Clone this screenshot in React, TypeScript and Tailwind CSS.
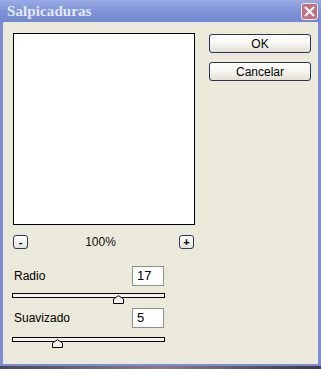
import React from "react";

const ui = { fontFamily: '"Liberation Sans", Arial, sans-serif' };

function Thumb() {
  return (
    <svg width="11" height="9" viewBox="0 0 11 9" className="block">
      <path d="M0.5 8.5 V4 L5.5 0.7 L10.5 4 V8.5 Z" fill="#f4f3ee" stroke="#000" strokeWidth="1" />
    </svg>
  );
}

function Slider({ pos }: { pos: number }) {
  return (
    <div className="relative w-[153px] h-[11px]">
      <div className="h-[5px] w-full border border-black bg-[#f3f1e8]" />
      <div className="absolute top-[2px]" style={{ left: pos }}>
        <Thumb />
      </div>
    </div>
  );
}

function SmallBtn({ children }: { children: React.ReactNode }) {
  return (
    <div className="w-[15px] h-[14px] rounded-[3px] border border-[#2c3a5a] bg-gradient-to-b from-white to-[#e4e2d6] flex items-center justify-center text-[11px] leading-none text-black font-bold">
      {children}
    </div>
  );
}

function Btn({ children }: { children: React.ReactNode }) {
  return (
    <div className="w-[102px] h-[19px] rounded-[3px] border border-[#27355a] bg-gradient-to-b from-white via-[#f6f5f0] to-[#e2e0d4] flex items-center justify-center text-[12px] text-black">
      {children}
    </div>
  );
}

export default function App() {
  return (
    <div className="w-[321px] h-[369px] flex flex-col overflow-hidden" style={ui}>
      {/* title bar */}
      <div className="h-[22px] flex items-center justify-between bg-gradient-to-b from-[#9aaae4] via-[#7f94d9] to-[#7387d2] pl-[7px] pr-[3px]">
        <span
          className="text-[15px] font-bold text-[#e4eaf8] tracking-[0.1px]"
          style={{ fontFamily: '"Liberation Serif", "Times New Roman", serif' }}
        >
          Salpicaduras
        </span>
        <div className="w-[17px] h-[17px] rounded-[3px] border border-[#f0e6ec] bg-[#c0707e] flex items-center justify-center">
          <svg width="11" height="11" viewBox="0 0 11 11">
            <path d="M1.5 1.5 L9.5 9.5 M9.5 1.5 L1.5 9.5" stroke="#fff" strokeWidth="2" strokeLinecap="round" />
          </svg>
        </div>
      </div>
      {/* body */}
      <div className="flex-1 flex border-l-[3px] border-r-[3px] border-b-[2px] border-[#7e8cd6] bg-[#ebe9da]">
        <div className="flex flex-col pl-[9px] pt-[11px] w-[193px]">
          <div className="ml-[1px] w-[182px] h-[192px] border border-black bg-white" />
          <div className="ml-[1px] mt-[8px] w-[181px] flex items-center justify-between">
            <SmallBtn>-</SmallBtn>
            <span className="text-[12px] text-[#111] mr-[6px]">100%</span>
            <SmallBtn>+</SmallBtn>
          </div>
          <div className="mt-[15px] flex items-start justify-between w-[150px] ml-[2px]">
            <span className="text-[12px] text-black mt-[1px]">Radio</span>
            <div className="w-[32px] h-[20px] border border-[#8d8d8d] bg-white text-[13px] text-black pl-[4px] leading-[18px]">
              17
            </div>
          </div>
          <div className="mt-[7px]">
            <Slider pos={101} />
          </div>
          <div className="mt-[4px] flex items-start justify-between w-[150px] ml-[2px]">
            <span className="text-[12px] text-black mt-[1px]">Suavizado</span>
            <div className="w-[32px] h-[20px] border border-[#8d8d8d] bg-white text-[13px] text-black pl-[4px] leading-[18px]">
              5
            </div>
          </div>
          <div className="mt-[9px]">
            <Slider pos={40} />
          </div>
        </div>
        <div className="flex flex-col gap-[9px] pt-[12px] pl-[13px]">
          <Btn>OK</Btn>
          <Btn>Cancelar</Btn>
        </div>
      </div>
      <div className="h-[3px] bg-gradient-to-r from-[#4a4a5a] via-[#8a7a8a] to-[#3a3a4a]" />
    </div>
  );
}
